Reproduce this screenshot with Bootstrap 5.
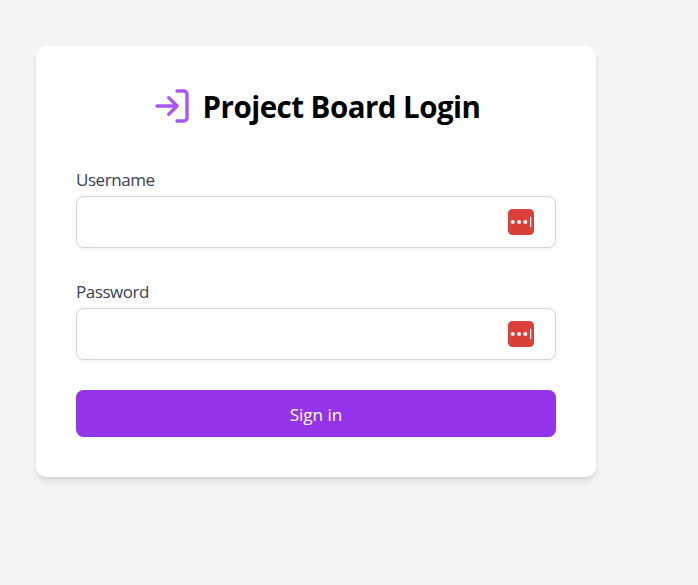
<!DOCTYPE html>
<html lang="en">
<head>
<meta charset="utf-8">
<meta name="viewport" content="width=device-width, initial-scale=1">
<title>Project Board Login</title>
<link href="https://cdn.jsdelivr.net/npm/bootstrap@5.3.0/dist/css/bootstrap.min.css" rel="stylesheet">
<style>
  body { background: #f3f4f6; font-family: "Segoe UI", "Open Sans", "Noto Sans", sans-serif; padding: 46px 0 0 36px; min-height: 100vh; }
  .login-panel { width: 560px; height: 431px; padding: 40px; border-radius: 10px; box-shadow: 0 5px 7.5px -1px rgba(0,0,0,.1), 0 2.5px 5px -2.5px rgba(0,0,0,.1); }
  .login-head { height: 40px; margin-bottom: 41px; }
  .login-head svg { margin-right: 11px; }
  .login-title { font-size: 29.5px; line-height: 40px; color: #000; white-space: nowrap; padding-top: 2px; letter-spacing: -.53px; }
  .field-label { font-size: 17px; line-height: 25px; color: #374151; margin-bottom: 4px; letter-spacing: -.45px; }
  .field-box { margin-bottom: 31px; }
  .field-box + .btn-sign { margin-top: -1px; }
  .field-box .form-control { height: 52px; border: 1px solid #d1d5db; border-radius: 7.5px; box-shadow: 0 1.25px 2.5px rgba(0,0,0,.05); }
  .fill-icon { position: absolute; right: 22px; top: 13px; }
  .btn-sign { height: 47px; padding: 2px 0 0; border: 0; border-radius: 7.5px; background: #9333ea; color: #fff; font-size: 17.2px; line-height: 45px; letter-spacing: -.05px; }
  .btn-sign:hover { background: #7e22ce; color: #fff; }
</style>
<script defer src="https://cdn.jsdelivr.net/npm/bootstrap@5.3.0/dist/js/bootstrap.bundle.min.js"></script>
</head>
<body>
<main class="login-panel bg-white">
  <div class="login-head d-flex align-items-center justify-content-center">
    <svg class="flex-shrink-0" width="40" height="40" viewBox="0 0 24 24" fill="none" stroke="#a855f7" stroke-width="2" stroke-linecap="round" stroke-linejoin="round" aria-hidden="true"><path d="M15 3h4a2 2 0 0 1 2 2v14a2 2 0 0 1-2 2h-4"/><path d="M10 17l5-5-5-5"/><path d="M15 12H3"/></svg>
    <h1 class="login-title fw-bold mb-0">Project Board Login</h1>
  </div>
  <form>
    <label class="field-label d-block" for="username">Username</label>
    <div class="field-box position-relative d-flex">
      <input class="form-control" id="username" type="text">
      <svg class="fill-icon" width="26" height="26" viewBox="0 0 26 26" aria-hidden="true"><rect width="26" height="26" rx="4.5" fill="#d9403a"/><g fill="#fff"><circle cx="4.7" cy="13" r="2"/><circle cx="11" cy="13" r="2"/><circle cx="17.3" cy="13" r="2"/><rect x="22" y="7.8" width="1.2" height="10.4" rx=".5"/></g></svg>
    </div>
    <label class="field-label d-block" for="password">Password</label>
    <div class="field-box position-relative d-flex">
      <input class="form-control" id="password" type="password">
      <svg class="fill-icon" width="26" height="26" viewBox="0 0 26 26" aria-hidden="true"><rect width="26" height="26" rx="4.5" fill="#d9403a"/><g fill="#fff"><circle cx="4.7" cy="13" r="2"/><circle cx="11" cy="13" r="2"/><circle cx="17.3" cy="13" r="2"/><rect x="22" y="7.8" width="1.2" height="10.4" rx=".5"/></g></svg>
    </div>
    <button class="btn btn-sign w-100 d-block" type="submit">Sign in</button>
  </form>
</main>
</body>
</html>
